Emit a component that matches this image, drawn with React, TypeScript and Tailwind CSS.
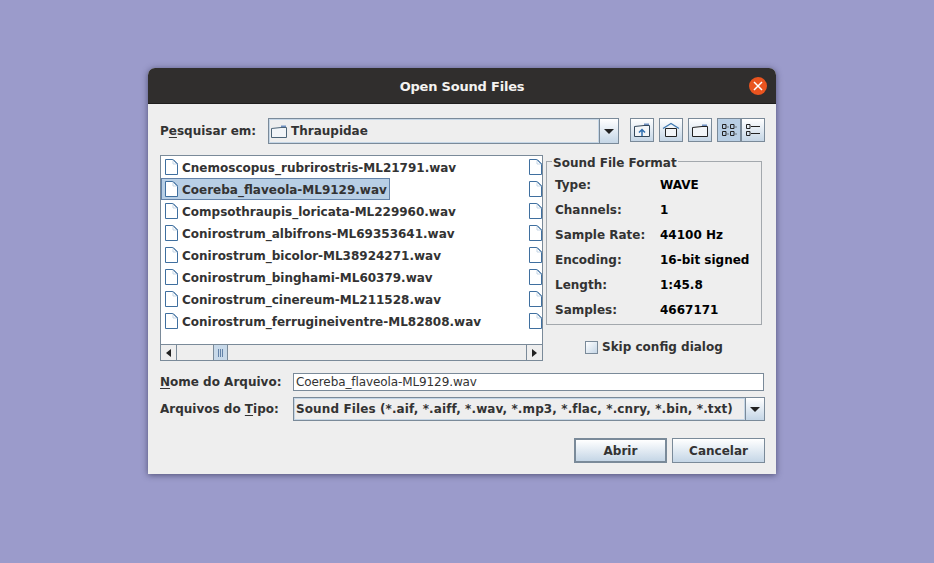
import type { ReactNode } from 'react'

const FILES = [
  'Cnemoscopus_rubrirostris-ML21791.wav',
  'Coereba_flaveola-ML9129.wav',
  'Compsothraupis_loricata-ML229960.wav',
  'Conirostrum_albifrons-ML69353641.wav',
  'Conirostrum_bicolor-ML38924271.wav',
  'Conirostrum_binghami-ML60379.wav',
  'Conirostrum_cinereum-ML211528.wav',
  'Conirostrum_ferrugineiventre-ML82808.wav',
]

const FORMAT = [
  ['Type:', 'WAVE'],
  ['Channels:', '1'],
  ['Sample Rate:', '44100 Hz'],
  ['Encoding:', '16-bit signed'],
  ['Length:', '1:45.8'],
  ['Samples:', '4667171'],
]

function FileIcon() {
  return (
    <svg width="14" height="16" viewBox="0 0 14 16" className="shrink-0">
      <path d="M1.5 .5H9L13.5 5V15.5H1.5Z" fill="#fff" stroke="#3f6f9f" />
      <path d="M9 .5V5H13.5" fill="none" stroke="#c5d6e6" />
      <path d="M9 .5L13.5 5" fill="none" stroke="#3f6f9f" />
    </svg>
  )
}

function FolderIcon() {
  return (
    <svg width="16" height="13" viewBox="0 0 16 13">
      <path d="M10 .5H15V3H10Z" fill="#6f8fc0" />
      <path d="M.5 3.5L10 2.5H15.5V12.5H.5Z" fill="#f2f5f8" stroke="#4d6477" />
    </svg>
  )
}

function Arrow() {
  return (
    <svg width="10" height="5" viewBox="0 0 10 5">
      <path d="M0 0H10L5 5Z" fill="#222" />
    </svg>
  )
}

function ToolButton({ active, children }: { active?: boolean; children: ReactNode }) {
  return (
    <div
      className={`flex h-[24px] w-[24px] items-center justify-center border border-[#7a8a99] ${
        active ? 'bg-[#b8cfe5]' : 'bg-gradient-to-b from-white to-[#c5d6e6]'
      }`}
    >
      {children}
    </div>
  )
}

function Mnemonic({ children }: { children: string }) {
  return <span className="underline underline-offset-2">{children}</span>
}

export default function App() {
  return (
    <div
      className="h-[563px] w-[934px] overflow-hidden bg-[#9b9bcb] pl-[148px] pt-[68px] text-[12px] font-bold text-[#333333]"
      style={{ fontFamily: '"DejaVu Sans", sans-serif' }}
    >
      <div className="h-[406px] w-[628px] overflow-hidden rounded-t-[7px] bg-[#eeeeee] shadow-[0_1px_6px_rgba(40,40,70,0.65)]">
        <div className="relative flex h-[36px] items-center justify-center border-b border-[#1f1e1d] bg-[#302e2d] pt-[3px]">
          <span className="text-[13px] tracking-[-0.2px] text-[#f4f3f1]">Open Sound Files</span>
          <div className="absolute right-[9px] top-[9px] flex h-[18px] w-[18px] items-center justify-center rounded-full bg-[#e9541f]">
            <svg width="10" height="10" viewBox="0 0 10 10" fill="none" stroke="#fff" strokeWidth="1.5">
              <path d="M1 1L9 9M9 1L1 9" />
            </svg>
          </div>
        </div>

        <div className="flex flex-col pl-[12px] pr-[11px] pt-[14px]">
          <div className="flex h-[26px] items-center">
            <span className="w-[108px]">P<Mnemonic>e</Mnemonic>squisar em:</span>
            <div className="flex h-[26px] w-[351px] border border-[#7a8a99]">
              <div className="flex flex-1 items-center gap-[4px] border border-[#c5d6e6] bg-[#eeeeee] pl-[1px]">
                <FolderIcon />
                <span>Thraupidae</span>
              </div>
              <div className="flex w-[19px] items-center justify-center border-l border-[#7a8a99] bg-gradient-to-b from-white to-[#c5d6e6]">
                <Arrow />
              </div>
            </div>
            <div className="ml-[11px] flex h-[24px] gap-[5px] self-start">
              <ToolButton>
                <svg width="16" height="14" viewBox="0 0 16 14">
                  <path d="M10 .5H15V3H10Z" fill="#6f8fc0" />
                  <path d="M.5 3.5L10 2.5H15.5V13.5H.5Z" fill="#f2f5f8" stroke="#33475a" />
                  <path d="M8 13V7M5 9.5L8 6.5L11 9.5" fill="none" stroke="#2f6fb0" strokeWidth="1.5" />
                </svg>
              </ToolButton>
              <ToolButton>
                <svg width="18" height="16" viewBox="0 0 18 16">
                  <path d="M1 6.5L9 1.5L17 6.5" fill="none" stroke="#3f78b0" strokeWidth="1.3" />
                  <path d="M3.5 6.5L9 3L14.5 6.5V14.5H3.5Z" fill="#f2f5f8" stroke="none" />
                  <path d="M3.5 6.5H14.5V14.5H3.5Z" fill="none" stroke="#222" />
                </svg>
              </ToolButton>
              <ToolButton>
                <svg width="16" height="13" viewBox="0 0 16 13">
                  <path d="M10 .5H15V3H10Z" fill="#6f8fc0" />
                  <path d="M.5 3.5L10 2.5H15.5V12.5H.5Z" fill="#f2f5f8" stroke="#222" />
                </svg>
              </ToolButton>
              <div className="flex">
                <ToolButton active>
                  <svg width="16" height="14" viewBox="0 0 16 14" fill="none" stroke="#222">
                    <path d="M1.5 1.5H5V5.5H1.5ZM1.5 8.5H5V12.5H1.5ZM9.5 1.5H13V5.5H9.5ZM9.5 8.5H13V12.5H9.5Z" />
                    <path d="M6.5 4H7.5M6.5 11H7.5M14.5 4H15.5M14.5 11H15.5" />
                  </svg>
                </ToolButton>
                <ToolButton>
                  <svg width="16" height="14" viewBox="0 0 16 14" fill="none" stroke="#222">
                    <path d="M1.5 1.5H5V5.5H1.5ZM1.5 8.5H5V12.5H1.5Z" />
                    <path d="M6 3.5H15M6 10.5H15" />
                  </svg>
                </ToolButton>
              </div>
            </div>
          </div>

          <div className="mt-[11px] flex h-[206px] items-start">
            <div className="flex h-[206px] w-[383px] flex-col border border-[#7a8a99] bg-white">
              <div className="relative flex-1 overflow-hidden">
                {FILES.map((name, i) => (
                  <div key={name} className="flex h-[22px] items-center">
                    <div
                      className={`flex h-[22px] items-center gap-[4px] ${
                        i === 1
                          ? 'border border-[#6382a8] bg-[#b8cfe5] pl-[2px] pr-[2px]'
                          : 'pl-[3px] pr-[4px]'
                      }`}
                    >
                      <FileIcon />
                      <span className="pt-[1px]">{name}</span>
                    </div>
                  </div>
                ))}
                <div className="absolute left-[367px] top-0">
                  {FILES.map((name) => (
                    <div key={name} className="flex h-[22px] items-center">
                      <FileIcon />
                    </div>
                  ))}
                </div>
              </div>
              <div className="flex h-[16px] shrink-0 border-t border-[#7a8a99] bg-[#eeeeee]">
                <div className="flex w-[16px] items-center justify-center border-r border-[#7a8a99]">
                  <div className="h-0 w-0 border-y-[4px] border-r-[5px] border-y-transparent border-r-[#222]" />
                </div>
                <div className="flex-1 pl-[36px]">
                  <div className="flex h-full w-[15px] items-center justify-center gap-[1px] border-x border-[#7a8a99] bg-[#c8d9e9]">
                    <span className="h-[8px] w-[1px] bg-[#6382a8]" />
                    <span className="h-[8px] w-[1px] bg-[#6382a8]" />
                    <span className="h-[8px] w-[1px] bg-[#6382a8]" />
                  </div>
                </div>
                <div className="flex w-[16px] items-center justify-center border-l border-[#7a8a99]">
                  <div className="h-0 w-0 border-y-[4px] border-l-[5px] border-y-transparent border-l-[#222]" />
                </div>
              </div>
            </div>

            <div className="ml-[3px] flex w-[216px] flex-col">
              <div className="relative mt-[6px] h-[164px] border border-[#a3a8ad] pl-[8px] pt-[10px]">
                <span className="absolute left-[5px] top-[-6px] bg-[#eeeeee] px-[1px] leading-[14px]">Sound File Format</span>
                {FORMAT.map(([label, value]) => (
                  <div key={label} className="flex h-[25px] items-center">
                    <span className="w-[105px]">{label}</span>
                    <span className="text-black">{value}</span>
                  </div>
                ))}
              </div>
              <div className="mt-[13px] flex items-center pl-[39px]">
                <span className="h-[13px] w-[13px] border border-[#7a8a99] bg-gradient-to-br from-white to-[#c5d6e6]" />
                <span className="ml-[4px]">Skip config dialog</span>
              </div>
            </div>
          </div>

          <div className="mt-[12px] flex h-[18px] items-center">
            <span className="w-[133px]"><Mnemonic>N</Mnemonic>ome do Arquivo:</span>
            <div className="flex h-[18px] w-[471px] items-center border border-[#7a8a99] bg-white pl-[2px] font-normal tracking-[-0.1px]">
              Coereba_flaveola-ML9129.wav
            </div>
          </div>

          <div className="mt-[6px] flex h-[24px] items-center">
            <span className="w-[133px]">Arquivos do <Mnemonic>T</Mnemonic>ipo:</span>
            <div className="flex h-[24px] w-[472px] border border-[#7a8a99]">
              <div className="flex flex-1 items-center border border-[#c5d6e6] pl-[1px] tracking-[0.11px]">
                Sound Files (*.aif, *.aiff, *.wav, *.mp3, *.flac, *.cnry, *.bin, *.txt)
              </div>
              <div className="flex w-[19px] items-center justify-center border-l border-[#7a8a99] bg-gradient-to-b from-white to-[#c5d6e6]">
                <Arrow />
              </div>
            </div>
          </div>

          <div className="mt-[17px] flex justify-end gap-[5px]">
            <button className="h-[25px] w-[93px] border-2 border-[#7a8a99] bg-gradient-to-b from-white to-[#c5d6e6] font-bold">
              Abrir
            </button>
            <button className="h-[25px] w-[93px] border border-[#7a8a99] bg-gradient-to-b from-white to-[#c5d6e6] font-bold">
              Cancelar
            </button>
          </div>
        </div>
      </div>
    </div>
  )
}
